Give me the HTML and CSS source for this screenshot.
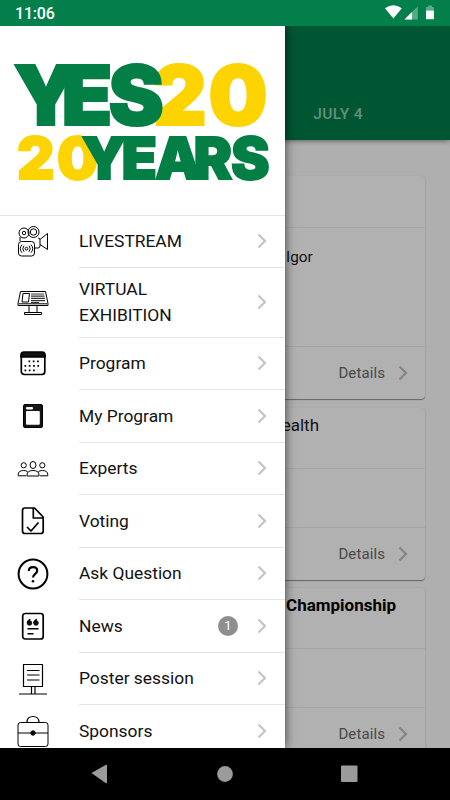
FILE: index.html
```html
<!DOCTYPE html>
<html lang="en">
<head>
<meta charset="utf-8">
<title>YES20</title>
<link rel="stylesheet" href="styles.css">
</head>
<body>
<div class="phone">
  <header class="status">
    <span class="clock">11:06</span>
    <svg class="status-icons" width="50" height="16" viewBox="0 0 50 16"><path d="M0 3.2Q8.300-2.800 16.800 3.200L8.400 13.600Z" fill="#fff"/><path d="M19.500 14.500L32.800 1.200V14.500Z" fill="#58ab86"/><path d="M19.500 14.500L27 7V14.500Z" fill="#fff"/><path d="M43 .5h4v1.500h2v3.500h-8V2h2z" fill="#58ab86"/><path d="M41 5.500h8v8.700h-8z" fill="#fff"/></svg>
  </header>
  <div class="screen">
    <main class="page">
      <div class="toolbar"><span class="tab">JULY 4</span></div>
      <div class="cards">
        <section class="card">
          <div class="card-head"></div>
          <div class="card-body tall"><span class="name">Igor</span></div>
          <div class="card-foot">Details<svg class="chev" viewBox="0 0 10 16"><path d="M1.500 1.500L8 8l-6.500 6.500"/></svg></div>
        </section>
        <section class="card">
          <div class="card-head second"><span class="health">ealth</span></div>
          <div class="card-body"></div>
          <div class="card-foot">Details<svg class="chev" viewBox="0 0 10 16"><path d="M1.500 1.500L8 8l-6.500 6.500"/></svg></div>
        </section>
        <section class="card">
          <div class="card-head second"><b class="champ">Championship</b></div>
          <div class="card-body"></div>
          <div class="card-foot">Details<svg class="chev" viewBox="0 0 10 16"><path d="M1.500 1.500L8 8l-6.500 6.500"/></svg></div>
        </section>
      </div>
    </main>
    <nav class="drawer">
      <svg class="logo" width="284" height="189" viewBox="0 26 284 189">
        <g class="big"><text class="gold" x="153 208.500" y="125">20</text><text class="green" x="13.500 61.500 108.500" y="125">YES</text></g>
        <g class="small"><text class="gold" x="17 57" y="179">20</text><text class="green" x="81.500 121.500 155 193.500 231" y="179">YEARS</text></g>
      </svg>
      <ul class="menu">
        <li class="item"><svg class="icon thin" viewBox="0 0 32 32"><circle cx="7" cy="7" r="5"/><circle cx="7" cy="7" r="1.700"/><circle cx="16.500" cy="6" r="5.500"/><circle cx="16.500" cy="6" r="3.200"/><path d="M3 11v4M21 12q2 0 2 2v6q0 2-2 2h-3M23 13.500l7.500-6v16l-7.500-5"/><rect x="1.500" y="15.500" width="16" height="14.500" rx="3"/><circle cx="9.500" cy="22.700" r="1.400"/><path d="M7 19.700q-2.500 3 0 6M12 19.700q2.500 3 0 6M5 18.700q-3.500 4 0 8M14 18.700q3.500 4 0 8"/></svg><div class="row"><span>LIVESTREAM</span><svg class="chev" viewBox="0 0 10 16"><path d="M1.500 1.500L8 8l-6.500 6.500"/></svg></div></li>
        <li class="item two"><svg class="icon thin" viewBox="0 0 32 32"><path d="M3.500 4.500h25l2.500 12v2h-30v-2zM1.500 16.800h29M6 6.500h6.500l-1 8.500H5zM12 18.500v7M20 18.500v7"/><path d="M14 7h13M14 9.200h13.500M14 11.400h14M14 13.600h14M14 15.500h8" stroke="#333" stroke-width="1.200"/><rect x="7.500" y="25.500" width="17" height="2"/></svg><div class="row"><span>VIRTUAL<br>EXHIBITION</span><svg class="chev" viewBox="0 0 10 16"><path d="M1.500 1.500L8 8l-6.500 6.500"/></svg></div></li>
        <li class="item"><svg class="icon" viewBox="0 0 32 32"><rect x="4.300" y="5" width="23.500" height="21.500" rx="3"/><path d="M4 9V7q0-3 3-3h18q3 0 3 3v2z" fill="#111"/><path d="M11.500 13.300h13M7.500 17.800h17M7.500 22.300h13" stroke-width="1.700" stroke-dasharray="1.700 2.600"/></svg><div class="row"><span>Program</span><svg class="chev" viewBox="0 0 10 16"><path d="M1.500 1.500L8 8l-6.500 6.500"/></svg></div></li>
        <li class="item"><svg class="icon" viewBox="0 0 32 32"><rect x="6.500" y="4.500" width="19" height="23" rx="1.500" fill="#161616" stroke-width="1"/><rect x="9" y="11" width="13.800" height="13.800" rx="1" fill="#fff" stroke="none"/><rect x="9" y="7" width="7" height="2.500" rx="1" fill="#fff" stroke="none"/></svg><div class="row"><span>My Program</span><svg class="chev" viewBox="0 0 10 16"><path d="M1.500 1.500L8 8l-6.500 6.500"/></svg></div></li>
        <li class="item"><svg class="icon thin" viewBox="0 0 32 32"><ellipse cx="16" cy="12" rx="3" ry="3.500"/><circle cx="6.700" cy="12.300" r="2.600"/><circle cx="25.300" cy="12.300" r="2.600"/><path d="M10 23v-1q0-4.500 6-4.500t6 4.500v1zM9 22.800H1.200v-1q0-4.300 5.500-4.300 2.500 0 4 1.300M23 22.800h7.800v-1q0-4.300-5.500-4.300-2.500 0-4 1.300"/></svg><div class="row"><span>Experts</span><svg class="chev" viewBox="0 0 10 16"><path d="M1.500 1.500L8 8l-6.500 6.500"/></svg></div></li>
        <li class="item"><svg class="icon" viewBox="0 0 32 32"><path d="M8 3h9.500l8.700 9v14q0 2.500-2.500 2.500H8q-2.500 0-2.500-2.500V5.500Q5.500 3 8 3zM16.300 3v10h9.900M10 22l4 4 7.500-8.500"/></svg><div class="row"><span>Voting</span><svg class="chev" viewBox="0 0 10 16"><path d="M1.500 1.500L8 8l-6.500 6.500"/></svg></div></li>
        <li class="item"><svg class="icon" viewBox="0 0 32 32"><circle cx="16" cy="16" r="14.400" stroke-width="2"/><path d="M11.800 13q0-3.800 4.200-3.800t4.200 3.500c0 3.300-4.200 3-4.200 6.800" stroke-width="2.200"/><circle cx="16" cy="23.300" r="1.300" fill="#000" stroke="none"/></svg><div class="row"><span>Ask Question</span><svg class="chev" viewBox="0 0 10 16"><path d="M1.500 1.500L8 8l-6.500 6.500"/></svg></div></li>
        <li class="item"><svg class="icon" viewBox="0 0 32 32"><rect x="5.700" y="3.500" width="20.500" height="25.500" rx="2.500"/><g fill="#111" stroke-width=".8"><circle cx="12.500" cy="13" r="2.300"/><circle cx="19" cy="13" r="2.300"/><path d="M10.200 13q0-3 3-4l-1 2.500zM16.700 13q0-3 3-4l-1 2.500z"/></g><path d="M10.500 18.800h11M10.500 23.800h6" stroke-width="1.500"/></svg><div class="row"><span>News</span><i class="badge">1</i><svg class="chev" viewBox="0 0 10 16"><path d="M1.500 1.500L8 8l-6.500 6.500"/></svg></div></li>
        <li class="item"><svg class="icon thin" viewBox="0 0 32 32"><path d="M6.500 1.500h19v22h-19zM14.500 23.500v7.500M18 23.500v7.500M2 31h28M10 7.500h12.500M10 12h12.500M10 17h12.500" stroke-width="1.200"/></svg><div class="row"><span>Poster session</span><svg class="chev" viewBox="0 0 10 16"><path d="M1.500 1.500L8 8l-6.500 6.500"/></svg></div></li>
        <li class="item"><svg class="icon thin" viewBox="0 0 32 32"><rect x="1" y="7.500" width="30" height="24" rx="2.500"/><path d="M10 7.500q0-6 6-6t6 6M1 18h30" stroke-width="1.200"/><circle cx="16" cy="18" r="2.200" fill="#000"/></svg><div class="row"><span>Sponsors</span><svg class="chev" viewBox="0 0 10 16"><path d="M1.500 1.500L8 8l-6.500 6.500"/></svg></div></li>
      </ul>
    </nav>
  </div>
  <footer class="navbar"><svg width="450" height="52" viewBox="0 0 450 52" fill="#9b9b9b"><path d="M91.500 25L105.500 17q1.500-.7 1.500 1v16q0 1.700-1.500 1z"/><circle cx="225" cy="26" r="7.900"/><rect x="341" y="17.500" width="16.500" height="16.500" rx="1"/></svg></footer>
</div>
</body>
</html>
```
FILE: styles.css
```css
* { box-sizing: border-box; }
body { margin: 0; font-family: Roboto, "Liberation Sans", sans-serif; color: #111; }
.phone { width: 450px; height: 800px; display: flex; flex-direction: column; overflow: hidden; }
.status { height: 26px; flex: none; background: #037f4b; color: #fff; display: flex; justify-content: space-between; align-items: center; padding: 0 15px; }
.clock { font-size: 16px; font-weight: 500; line-height: 26px; padding-top: 2px; letter-spacing: -.2px; }
.status-icons { display: block; }
.screen { height: 722px; flex: none; position: relative; overflow: hidden; background: #afafaf; }
.toolbar { height: 114px; background: #005633; box-shadow: 0 1px 5px rgba(0,0,0,.45); padding: 76px 87px 0 0; text-align: right; }
.tab { font-size: 15.500px; font-weight: 500; line-height: 24px; letter-spacing: .4px; color: #668f7c; }
.cards { padding: 35.500px 25px 0; display: flex; flex-direction: column; gap: 8.500px; }
.card { background: #b1b1b1; border-radius: 4px; box-shadow: 0 1px 1px rgba(0,0,0,.4), 0 0 2px rgba(0,0,0,.08); }
.card-head { height: 52.500px; border-bottom: 1px solid #a4a4a4; }
.card-head.second { height: 61px; padding-top: 5px; line-height: 24px; }
.card-body { height: 59px; border-bottom: 1px solid #a4a4a4; }
.card-body.tall { height: 119px; padding: 18px 0 0 261px; line-height: 22px; }
.card-foot { height: 52px; display: flex; justify-content: flex-end; align-items: center; gap: 13px; padding-right: 17px; font-size: 15px; letter-spacing: .1px; color: #484848; }
.card-foot .chev { stroke: #858585; }
.name { font-size: 15.300px; }
.health, .champ { display: block; text-align: right; font-size: 17px; white-space: nowrap; }
.health { padding-right: 106px; }
.champ { padding-right: 29px; color: #000; font-weight: 700; }
.drawer { position: absolute; left: 0; top: 0; width: 284.500px; height: 722px; background: #fff; box-shadow: 0 0 10px rgba(0,0,0,.65); overflow: hidden; }
.logo { display: block; font-family: Inter, sans-serif; font-weight: 900; }
.big { font-size: 83px; stroke-width: 2.200px; }
.small { font-size: 58px; stroke-width: 1.800px; }
.green { fill: #037f45; stroke: #037f45; }
.gold { fill: #fdd400; stroke: #fdd400; }
.menu { list-style: none; margin: 0; padding: 0; border-top: 1px solid #e4e4e4; }
.item { height: 52.500px; display: flex; align-items: center; padding-left: 17px; }
.item:first-child { height: 51.500px; }
.item.two { height: 70px; }
.icon { width: 32px; height: 32px; flex: none; margin-right: 30px; fill: none; stroke: #000; stroke-width: 1.700; stroke-linejoin: round; stroke-linecap: butt; }
.icon.thin { stroke-width: 1; }
.row { flex: 1; height: 100%; display: flex; align-items: center; border-bottom: 1px solid #e4e4e4; padding-right: 17.500px; font-size: 17.400px; line-height: 26px; }
.row span { flex: 1; }
.chev { width: 10px; height: 16px; flex: none; fill: none; stroke: #c5c5c8; stroke-width: 2.200; }
.badge { width: 20px; height: 20px; border-radius: 50%; background: #8e8e93; color: #fff; font-style: normal; font-size: 13px; line-height: 20px; text-align: center; margin-right: 19px; }
.navbar { height: 52px; background: #000; }
.navbar svg { display: block; }
```
